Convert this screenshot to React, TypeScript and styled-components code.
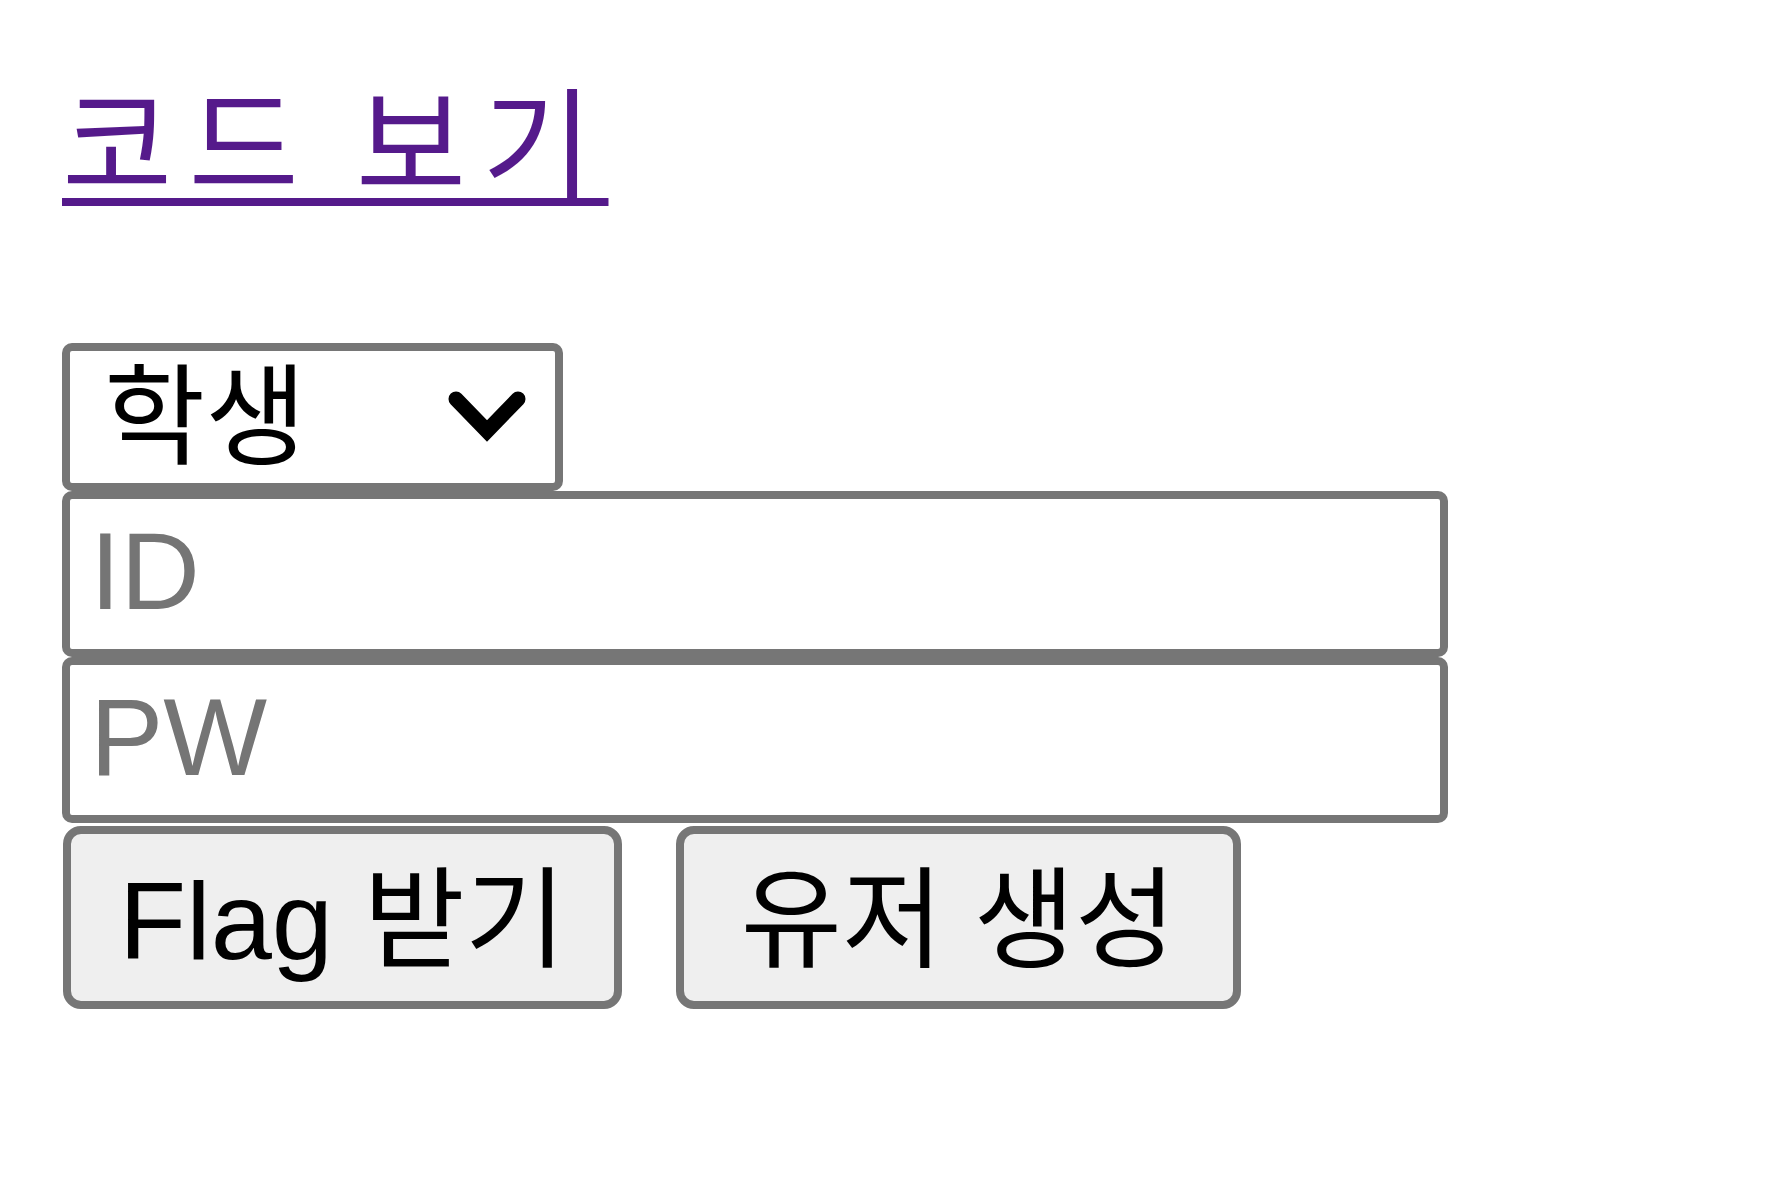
import styled, { createGlobalStyle } from "styled-components";

const GlobalStyle = createGlobalStyle`
  body {
    margin: 0;
    background: #ffffff;
  }
`;

const Page = styled.div`
  display: flex;
  flex-direction: column;
  align-items: flex-start;
  padding: 77px 0 0 62px;
`;

const CodeLink = styled.a`
  display: inline-block;
  font-family: "Noto Sans CJK KR", sans-serif;
  font-size: 120px;
  line-height: 120px;
  letter-spacing: 16px;
  word-spacing: -2px;
  color: #551a8b;
  text-decoration: underline;
  text-decoration-thickness: 8px;
  text-underline-offset: 9px;
`;

const LoginForm = styled.form`
  display: flex;
  flex-direction: column;
  align-items: flex-start;
  margin-top: 146px;
`;

const SelectWrap = styled.div`
  position: relative;
  width: 501px;
  height: 148px;
`;

const RoleSelect = styled.select`
  appearance: none;
  box-sizing: border-box;
  width: 100%;
  height: 100%;
  margin: 0;
  padding: 0 0 0 34px;
  border: 8px solid #767676;
  border-radius: 10px;
  background: #ffffff;
  color: #000000;
  font-family: "Liberation Sans", "Noto Sans CJK KR", sans-serif;
  font-size: 110px;
  outline: none;
`;

const Chevron = styled.svg`
  position: absolute;
  left: 384px;
  top: 46px;
  pointer-events: none;
`;

const TextField = styled.input`
  box-sizing: border-box;
  width: 1386px;
  height: 166px;
  margin: 0;
  padding: 0 20px 8px;
  border: 8px solid #767676;
  border-radius: 10px;
  background: #ffffff;
  font-family: "Liberation Sans", "Noto Sans CJK KR", sans-serif;
  font-size: 110px;
  color: #000000;
  outline: none;

  &::placeholder {
    color: #757575;
  }
`;

const ButtonRow = styled.div`
  display: flex;
  gap: 54px;
  margin: 3px 0 0 1px;
`;

const ActionButton = styled.button<{ $width: number }>`
  box-sizing: border-box;
  width: ${(p) => p.$width}px;
  height: 183px;
  margin: 0;
  padding: 6px 0 0;
  border: 8px solid #767676;
  border-radius: 18px;
  background: #efefef;
  color: #000000;
  font-family: "Liberation Sans", "Noto Sans CJK KR", sans-serif;
  font-size: 110px;
  line-height: 126px;
  white-space: nowrap;
`;

function App() {
  return (
    <>
      <GlobalStyle />
      <Page>
        <CodeLink href="#code">코드 보기</CodeLink>
        <LoginForm onSubmit={(e) => e.preventDefault()}>
          <SelectWrap>
            <RoleSelect defaultValue="student">
              <option value="student">학생</option>
              <option value="teacher">선생님</option>
            </RoleSelect>
            <Chevron width="82" height="54" viewBox="0 0 82 54">
              <path
                d="M10 10 L41 42 L72 10"
                fill="none"
                stroke="#000"
                strokeWidth="15"
                strokeLinecap="round"
                strokeLinejoin="miter"
              />
            </Chevron>
          </SelectWrap>
          <TextField type="text" placeholder="ID" />
          <TextField type="password" placeholder="PW" />
          <ButtonRow>
            <ActionButton type="button" $width={559}>
              Flag 받기
            </ActionButton>
            <ActionButton type="button" $width={565}>
              유저 생성
            </ActionButton>
          </ButtonRow>
        </LoginForm>
      </Page>
    </>
  );
}

export default App;
